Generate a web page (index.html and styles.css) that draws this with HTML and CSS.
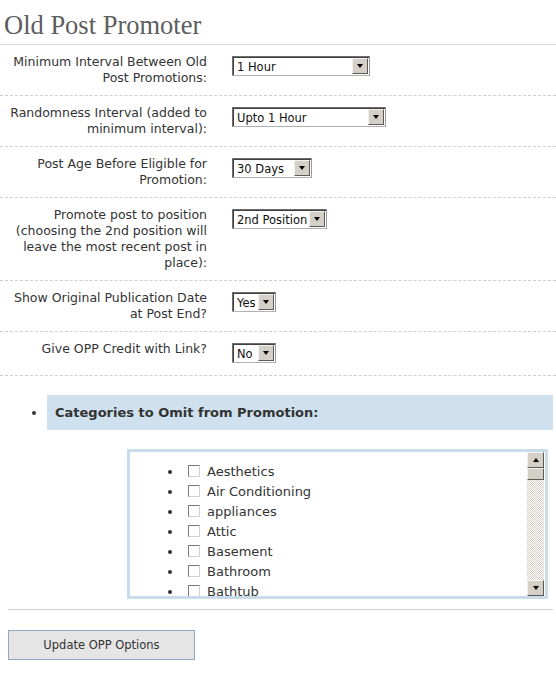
FILE: index.html
```html
<!DOCTYPE html>
<html>
<head>
<meta charset="utf-8">
<title>Old Post Promoter</title>
<link rel="stylesheet" href="styles.css">
</head>
<body>
<div class="wrap">
  <h2 class="title">Old Post Promoter</h2>
  <div class="form">
    <div class="row">
      <div class="label">Minimum Interval Between Old Post Promotions:</div>
      <div class="field"><div class="select w138"><span class="val">1 Hour</span><span class="btn"><i class="tri"></i></span></div></div>
    </div>
    <div class="row">
      <div class="label">Randomness Interval (added to minimum interval):</div>
      <div class="field"><div class="select w154"><span class="val">Upto 1 Hour</span><span class="btn"><i class="tri"></i></span></div></div>
    </div>
    <div class="row">
      <div class="label">Post Age Before Eligible for Promotion:</div>
      <div class="field"><div class="select w80"><span class="val">30 Days</span><span class="btn"><i class="tri"></i></span></div></div>
    </div>
    <div class="row">
      <div class="label">Promote post to position (choosing the 2nd position will leave the most recent post in place):</div>
      <div class="field"><div class="select w95"><span class="val">2nd Position</span><span class="btn"><i class="tri"></i></span></div></div>
    </div>
    <div class="row">
      <div class="label">Show Original Publication Date at Post End?</div>
      <div class="field"><div class="select w44"><span class="val">Yes</span><span class="btn"><i class="tri"></i></span></div></div>
    </div>
    <div class="row">
      <div class="label">Give OPP Credit with Link?</div>
      <div class="field"><div class="select w44"><span class="val">No</span><span class="btn"><i class="tri"></i></span></div></div>
    </div>
  </div>

  <ul class="cats">
    <li class="cats-head">Categories to Omit from Promotion:</li>
  </ul>

  <div class="catbox">
    <ul class="catlist">
      <li><span class="cb"></span>Aesthetics</li>
      <li><span class="cb"></span>Air Conditioning</li>
      <li><span class="cb"></span>appliances</li>
      <li><span class="cb"></span>Attic</li>
      <li><span class="cb"></span>Basement</li>
      <li><span class="cb"></span>Bathroom</li>
      <li><span class="cb"></span>Bathtub</li>
    </ul>
    <div class="scrollbar">
      <div class="sb-btn"><i class="tri up"></i></div>
      <div class="sb-thumb"></div>
      <div class="sb-track"></div>
      <div class="sb-btn"><i class="tri"></i></div>
    </div>
  </div>

  <div class="bottom-line"></div>
  <button class="submit" type="button">Update OPP Options</button>
</div>
</body>
</html>
```
FILE: styles.css
```css
html, body {
  margin: 0;
  padding: 0;
  background: #fff;
}
body {
  font-family: "DejaVu Sans", Verdana, sans-serif;
  font-size: 12.5px;
  color: #333;
}
.wrap {
  width: 556px;
}
.title {
  margin: 0;
  padding: 11px 4px 5px;
  font-family: "Liberation Serif", "Times New Roman", serif;
  font-weight: normal;
  font-size: 26.5px;
  line-height: 28px;
  color: #5d5d5d;
  border-bottom: 1px solid #dcdcdc;
}
.row {
  display: grid;
  grid-template-columns: 200px 1fr;
  column-gap: 25px;
  padding: 9px 0 9px 7px;
  border-bottom: 1px dashed #cfcfcf;
}
.label {
  text-align: right;
  line-height: 16px;
  color: #333;
}
.field {
  padding: 2px 0 3px;
}
.select {
  display: flex;
  align-items: center;
  height: 20px;
  box-sizing: border-box;
  border: 1px solid #6e6e6e;
  border-right-color: #9a9a9a;
  border-bottom-color: #b0b0b0;
  box-shadow: inset 1px 1px 0 #404040;
  background: #fff;
  color: #111;
  padding: 0 1px 0 4px;
  font-size: 11.5px;
}
.w138 { width: 138px; }
.w154 { width: 154px; }
.w80 { width: 80px; }
.w95 { width: 95px; }
.w44 { width: 44px; }
.val {
  flex: 1;
  white-space: nowrap;
  overflow: hidden;
  line-height: 16px;
  padding-top: 1px;
}
.btn, .sb-btn {
  width: 16px;
  height: 16px;
  box-sizing: border-box;
  background: #d4d0c8;
  border: 1px solid;
  border-color: #f4f3ef #5a5a5a #5a5a5a #f4f3ef;
  display: flex;
  align-items: center;
  justify-content: center;
  flex: none;
}
.tri {
  display: block;
  width: 0;
  height: 0;
  border-left: 3.5px solid transparent;
  border-right: 3.5px solid transparent;
  border-top: 4px solid #000;
}
.tri.up {
  border-top: 0;
  border-bottom: 4px solid #000;
}
.cats {
  margin: 19px 3px 0 0;
  padding: 0 0 0 47px;
  list-style: disc;
  color: #333;
}
.cats-head {
  background: #cfe1ee;
  height: 35px;
  line-height: 35px;
  padding: 0 8px;
  font-weight: bold;
  font-size: 13px;
  color: #333;
}
.catbox {
  margin: 19px 0 0 127px;
  width: 421px;
  height: 150px;
  box-sizing: border-box;
  border: 3px solid #c9dcea;
  display: flex;
  overflow: hidden;
  background: #fff;
}
.catlist {
  flex: 1;
  margin: 0;
  padding: 10px 0 0 53px;
  list-style: disc;
  overflow: hidden;
}
.catlist li {
  line-height: 20px;
  font-size: 13px;
  color: #333;
  white-space: nowrap;
}
.cb {
  display: inline-block;
  width: 12px;
  height: 12px;
  box-sizing: border-box;
  border: 1px solid;
  border-color: #7a7a7a #d0d0d0 #d0d0d0 #7a7a7a;
  margin: 0 7px 0 5px;
  vertical-align: -1px;
  background: #fff;
}
.scrollbar {
  width: 17px;
  flex: none;
  margin-right: 1px;
  display: flex;
  flex-direction: column;
}
.scrollbar .sb-btn {
  width: 17px;
}
.sb-thumb {
  height: 12px;
  box-sizing: border-box;
  background: #d4d0c8;
  border: 1px solid;
  border-color: #f4f3ef #5a5a5a #5a5a5a #f4f3ef;
}
.sb-track {
  flex: 1;
  background-color: #fff;
  background-image: repeating-conic-gradient(#d4d0c8 0 25%, #fff 0 50%);
  background-size: 2px 2px;
}
.bottom-line {
  margin: 10px 3px 0 8px;
  border-top: 1px solid #cfcfcf;
}
.submit {
  display: block;
  margin: 20px 0 0 8px;
  width: 187px;
  height: 30px;
  background: #e5e5e5;
  border: 1px solid #90a9bf;
  font-family: "DejaVu Sans", Verdana, sans-serif;
  font-size: 11.5px;
  color: #333;
  padding: 0;
}
```
